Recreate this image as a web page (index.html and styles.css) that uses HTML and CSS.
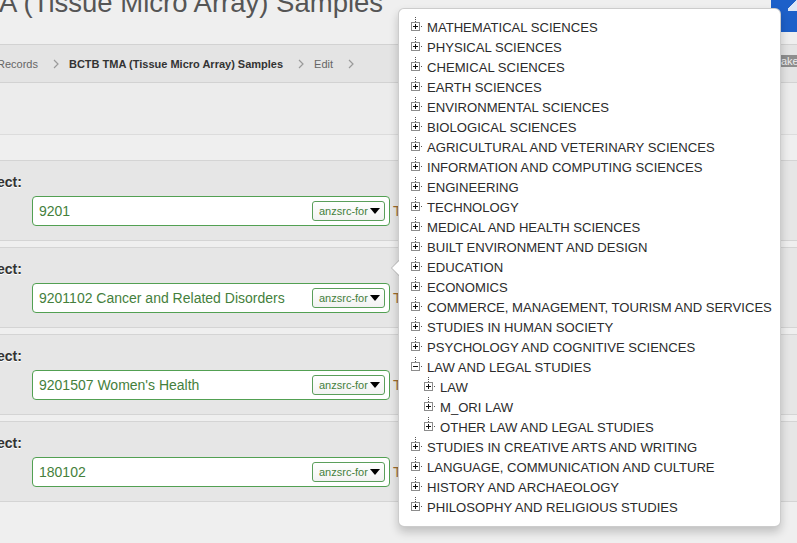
FILE: index.html
```html
<!DOCTYPE html>
<html>
<head>
<meta charset="utf-8">
<link rel="stylesheet" href="styles.css">
</head>
<body>
<svg width="0" height="0" class="defs">
  <defs>
    <symbol id="plus" viewBox="0 0 13 20">
      <rect x="4" y="0" width="1" height="1" fill="#555"/>
      <rect x="4" y="2" width="1" height="1" fill="#555"/>
      <rect x="4" y="4" width="1" height="1" fill="#555"/>
      <rect x="0.5" y="5.5" width="8" height="8" fill="#fff" stroke="#8c8c8c"/>
      <rect x="2" y="9" width="5" height="1" fill="#111"/>
      <rect x="4" y="7" width="1" height="5" fill="#111"/>
      <rect x="10" y="9" width="1" height="1" fill="#555"/>
    </symbol>
    <symbol id="minus" viewBox="0 0 13 20">
      <rect x="4" y="0" width="1" height="1" fill="#555"/>
      <rect x="4" y="2" width="1" height="1" fill="#555"/>
      <rect x="4" y="4" width="1" height="1" fill="#555"/>
      <rect x="0.5" y="5.5" width="8" height="8" fill="#fff" stroke="#8c8c8c"/>
      <rect x="2" y="9" width="5" height="1" fill="#111"/>
      <rect x="10" y="9" width="1" height="1" fill="#555"/>
    </symbol>
    <symbol id="chev" viewBox="0 0 6 10">
      <polyline points="1,1 5,5 1,9" fill="none" stroke="#9a9a9a" stroke-width="1.2"/>
    </symbol>
  </defs>
</svg>

<header class="topbar">
  <h1 class="title">A (Tissue Micro Array) Samples</h1>
  <div class="bluebtn"><span class="bluebtn-mark"></span></div>
</header>

<nav class="crumbs">
  <span class="crumb first">Records</span>
  <svg class="chev"><use href="#chev"/></svg>
  <span class="crumb strong">BCTB TMA (Tissue Micro Array) Samples</span>
  <svg class="chev"><use href="#chev"/></svg>
  <span class="crumb">Edit</span>
  <svg class="chev"><use href="#chev"/></svg>
  <span class="grey-btn">ake</span>
</nav>

<div class="toolbar"></div>

<main class="sections">
  <section class="field">
    <div class="label">ect:</div>
    <div class="row">
      <div class="input"><span class="val">9201</span><span class="select">anzsrc-for<i class="caret"></i></span></div>
      <span class="tail">T</span>
    </div>
  </section>
  <section class="field">
    <div class="label">ect:</div>
    <div class="row">
      <div class="input"><span class="val">9201102 Cancer and Related Disorders</span><span class="select">anzsrc-for<i class="caret"></i></span></div>
      <span class="tail">T</span>
    </div>
  </section>
  <section class="field">
    <div class="label">ect:</div>
    <div class="row">
      <div class="input"><span class="val">9201507 Women's Health</span><span class="select">anzsrc-for<i class="caret"></i></span></div>
      <span class="tail">T</span>
    </div>
  </section>
  <section class="field">
    <div class="label">ect:</div>
    <div class="row">
      <div class="input"><span class="val">180102</span><span class="select">anzsrc-for<i class="caret"></i></span></div>
      <span class="tail">T</span>
    </div>
  </section>
</main>

<div class="popover">
  <ul class="tree">
    <li><svg class="ico"><use href="#plus"/></svg>MATHEMATICAL SCIENCES</li>
    <li><svg class="ico"><use href="#plus"/></svg>PHYSICAL SCIENCES</li>
    <li><svg class="ico"><use href="#plus"/></svg>CHEMICAL SCIENCES</li>
    <li><svg class="ico"><use href="#plus"/></svg>EARTH SCIENCES</li>
    <li><svg class="ico"><use href="#plus"/></svg>ENVIRONMENTAL SCIENCES</li>
    <li><svg class="ico"><use href="#plus"/></svg>BIOLOGICAL SCIENCES</li>
    <li><svg class="ico"><use href="#plus"/></svg>AGRICULTURAL AND VETERINARY SCIENCES</li>
    <li><svg class="ico"><use href="#plus"/></svg>INFORMATION AND COMPUTING SCIENCES</li>
    <li><svg class="ico"><use href="#plus"/></svg>ENGINEERING</li>
    <li><svg class="ico"><use href="#plus"/></svg>TECHNOLOGY</li>
    <li><svg class="ico"><use href="#plus"/></svg>MEDICAL AND HEALTH SCIENCES</li>
    <li><svg class="ico"><use href="#plus"/></svg>BUILT ENVIRONMENT AND DESIGN</li>
    <li><svg class="ico"><use href="#plus"/></svg>EDUCATION</li>
    <li><svg class="ico"><use href="#plus"/></svg>ECONOMICS</li>
    <li><svg class="ico"><use href="#plus"/></svg>COMMERCE, MANAGEMENT, TOURISM AND SERVICES</li>
    <li><svg class="ico"><use href="#plus"/></svg>STUDIES IN HUMAN SOCIETY</li>
    <li><svg class="ico"><use href="#plus"/></svg>PSYCHOLOGY AND COGNITIVE SCIENCES</li>
    <li><svg class="ico"><use href="#minus"/></svg>LAW AND LEGAL STUDIES</li>
    <li class="sub"><svg class="ico"><use href="#plus"/></svg>LAW</li>
    <li class="sub"><svg class="ico"><use href="#plus"/></svg>M_ORI LAW</li>
    <li class="sub"><svg class="ico"><use href="#plus"/></svg>OTHER LAW AND LEGAL STUDIES</li>
    <li><svg class="ico"><use href="#plus"/></svg>STUDIES IN CREATIVE ARTS AND WRITING</li>
    <li><svg class="ico"><use href="#plus"/></svg>LANGUAGE, COMMUNICATION AND CULTURE</li>
    <li><svg class="ico"><use href="#plus"/></svg>HISTORY AND ARCHAEOLOGY</li>
    <li><svg class="ico"><use href="#plus"/></svg>PHILOSOPHY AND RELIGIOUS STUDIES</li>
  </ul>
</div>
</body>
</html>
```

FILE: styles.css
```css
html, body {
  margin: 0;
  padding: 0;
}
body {
  width: 797px;
  height: 543px;
  overflow: hidden;
  background: #efefef;
  font-family: "Liberation Sans", Arial, sans-serif;
  color: #333;
  position: relative;
}
.defs {
  position: absolute;
  width: 0;
  height: 0;
}

/* header */
.topbar {
  height: 44px;
  display: flex;
  justify-content: space-between;
  align-items: flex-start;
}
.title {
  margin: -14px 0 0 -1px;
  font-size: 27.5px;
  line-height: 33px;
  font-weight: normal;
  color: #555;
  white-space: nowrap;
}
.bluebtn {
  width: 26px;
  height: 32px;
  background: #1d60c9;
  border-bottom-left-radius: 3px;
  position: relative;
}
.bluebtn-mark {
  position: absolute;
  right: 0;
  top: 0;
  width: 9px;
  height: 10px;
  border-bottom: 1px solid #fff;
  background: linear-gradient(135deg, transparent 45%, #fff 46%, #fff 100%);
  opacity: 0.85;
}

/* breadcrumb */
.crumbs {
  height: 39px;
  box-sizing: border-box;
  border-top: 1px solid #d2d2d2;
  border-bottom: 1px solid #d2d2d2;
  background: #e4e4e4;
  display: flex;
  align-items: center;
  font-size: 11px;
  color: #666;
}
.crumb.first {
  margin-left: -3px;
}
.crumb.strong {
  font-weight: bold;
  color: #333;
}
.chev {
  width: 6px;
  height: 10px;
  margin: 0 10px 0 15px;
}
.grey-btn {
  margin-left: auto;
  width: 18px;
  height: 12px;
  line-height: 12px;
  background: #8e8e8e;
  color: #eee;
  font-size: 11px;
  padding-left: 2px;
  box-sizing: border-box;
  margin-top: -6px;
  overflow: hidden;
}

/* toolbar strip */
.toolbar {
  height: 52px;
  box-sizing: border-box;
  border-bottom: 1px solid #dcdcdc;
  background: #ececec;
}

/* sections */
.sections {
  margin-top: 25px;
  display: flex;
  flex-direction: column;
  gap: 6px;
}
.field {
  height: 81px;
  box-sizing: border-box;
  border-top: 1px solid #d4d4d4;
  border-bottom: 1px solid #d4d4d4;
  background: #e6e6e6;
  padding-top: 11px;
}
.label {
  margin-left: -3px;
  font-size: 14px;
  font-weight: bold;
  line-height: 20px;
  color: #333;
  text-shadow: 0 1px 0 #fff;
}
.row {
  margin-top: 4px;
  display: flex;
  align-items: center;
}
.input {
  margin-left: 32px;
  width: 358px;
  height: 30px;
  box-sizing: border-box;
  border: 1px solid #52a052;
  border-radius: 4px;
  background: #fff;
  display: flex;
  align-items: center;
  padding: 0 4px 0 6px;
}
.val {
  flex: 1;
  font-size: 14px;
  color: #457f3c;
  white-space: nowrap;
}
.select {
  width: 73px;
  height: 20px;
  box-sizing: border-box;
  border: 1px solid #5a9e5a;
  border-radius: 3px;
  background: linear-gradient(#ffffff, #f2f2f2);
  font-size: 11px;
  color: #457f3c;
  display: flex;
  align-items: center;
  padding-left: 6px;
}
.caret {
  margin-left: auto;
  margin-right: 4px;
  width: 0;
  height: 0;
  border-left: 5px solid transparent;
  border-right: 5px solid transparent;
  border-top: 6px solid #000;
}
.tail {
  margin-left: 3px;
  font-size: 14px;
  color: #9a6a2e;
}

/* popover */
.popover {
  position: absolute;
  left: 398px;
  top: 8px;
  width: 383px;
  height: 519px;
  box-sizing: border-box;
  background: #fff;
  border: 1px solid rgba(0, 0, 0, 0.2);
  border-radius: 6px;
  box-shadow: 0 5px 10px rgba(0, 0, 0, 0.2);
}
.popover::before,
.popover::after {
  content: "";
  position: absolute;
  width: 0;
  height: 0;
  border-style: solid;
  border-color: transparent;
}
.popover::before {
  left: -8px;
  top: 251px;
  border-width: 8px 8px 8px 0;
  border-right-color: rgba(0, 0, 0, 0.2);
}
.popover::after {
  left: -7px;
  top: 252px;
  border-width: 7px 7px 7px 0;
  border-right-color: #fff;
}
.tree {
  list-style: none;
  margin: 0;
  padding: 8px 0 0 12px;
}
.tree li {
  height: 20px;
  display: flex;
  align-items: center;
  font-size: 13.1px;
  color: #2b2b2b;
  white-space: nowrap;
}
.tree li.sub {
  padding-left: 13px;
}
.ico {
  width: 13px;
  height: 20px;
  margin-right: 3px;
  flex: none;
}
```
